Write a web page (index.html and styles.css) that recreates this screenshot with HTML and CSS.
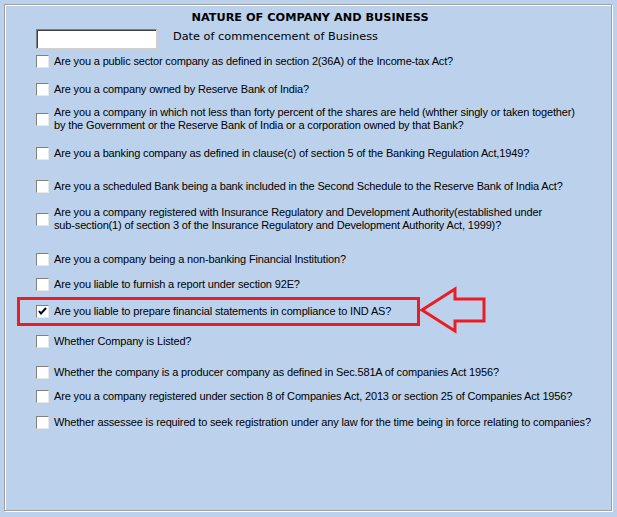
FILE: index.html
```html
<!DOCTYPE html>
<html lang="en">
<head>
    <meta charset="UTF-8">
    <meta name="viewport" content="width=device-width, initial-scale=1.0">
    <title>Nature of Company and Business</title>
    <link rel="stylesheet" href="styles.css">
</head>
<body>
    <div id="nature-frame">
        <div id="nature-title">NATURE OF COMPANY AND BUSINESS</div>

        <div id="date-row">
            <input type="text" id="date-input">
            <label for="date-input" id="date-label">Date of commencement of Business</label>
        </div>

        <div id="questions">
            <div class="question"><span class="check"></span><span class="text">Are you a public sector company as defined in section 2(36A) of the Income-tax Act?</span></div>
            <div class="question"><span class="check"></span><span class="text">Are you a company owned by Reserve Bank of India?</span></div>
            <div class="question two-line"><span class="check"></span><span class="text">Are you a company in which not less than forty percent of the shares are held (whther singly or taken together)<br>by the Government or the Reserve Bank of India or a corporation owned by that Bank?</span></div>
            <div class="question"><span class="check"></span><span class="text">Are you a banking company as defined in clause(c) of section 5 of the Banking Regulation Act,1949?</span></div>
            <div class="question"><span class="check"></span><span class="text">Are you a scheduled Bank being a bank included in the Second Schedule to the Reserve Bank of India Act?</span></div>
            <div class="question two-line"><span class="check"></span><span class="text">Are you a company registered with Insurance Regulatory and Development Authority(established under<br>sub-section(1) of section 3 of the Insurance Regulatory and Development Authority Act, 1999)?</span></div>
            <div class="question"><span class="check"></span><span class="text">Are you a company being a non-banking Financial Institution?</span></div>
            <div class="question"><span class="check"></span><span class="text">Are you liable to furnish a report under section 92E?</span></div>
            <div class="question"><span class="check checked"><svg width="11" height="11" viewBox="0 0 11 11"><path d="M2 5 L4 7.5 L9 2" fill="none" stroke="#000" stroke-width="2"/></svg></span><span class="text">Are you liable to prepare financial statements in compliance to IND AS?</span></div>
            <div class="question"><span class="check"></span><span class="text">Whether Company is Listed?</span></div>
            <div class="question"><span class="check"></span><span class="text">Whether the company is a producer company as defined in Sec.581A of companies Act 1956?</span></div>
            <div class="question"><span class="check"></span><span class="text">Are you a company registered under section 8 of Companies Act, 2013 or section 25 of Companies Act 1956?</span></div>
            <div class="question"><span class="check"></span><span class="text">Whether assessee is required to seek registration under any law for the time being in force relating to companies?</span></div>
        </div>
    </div>

    <!-- annotation pointing at the IND AS question -->
    <svg id="callout" width="617" height="517" viewBox="0 0 617 517">
        <rect x="18.5" y="298.5" width="400" height="26" fill="none" stroke="#ec1c24" stroke-width="3"/>
        <polygon points="422,310 455,289 455,299 484,299 484,321 455,321 455,331" fill="none" stroke="#ec1c24" stroke-width="3"/>
    </svg>
</body>
</html>
```

FILE: styles.css
```css
body {
    margin: 0;
    width: 617px;
    height: 517px;
    background-color: #bcd2ec;
    font-family: "Liberation Sans", Arial, sans-serif;
    font-size: 11px;
    color: #000;
    position: relative;
    overflow: hidden;
}

#nature-frame {
    margin: 4px 0 0 4px;
    width: 606px;
    height: 505px;
    border: 1px solid #a0a0a0;
    box-shadow: inset 1px 1px 0 #fff, 1px 1px 0 #fff;
}

#nature-title {
    margin-top: 6px;
    padding-left: 4px;
    text-align: center;
    font-family: "DejaVu Sans", Verdana, sans-serif;
    font-weight: bold;
    font-size: 11.3px;
    height: 14px;
    line-height: 14px;
}

#date-row {
    display: flex;
    align-items: center;
    margin-top: 4px;
    padding-left: 31px;
}

#date-input {
    box-sizing: border-box;
    width: 121px;
    height: 20px;
    margin: 0;
    padding: 0;
    border: 1px solid;
    border-color: #808080 #d4d0c8 #d4d0c8 #808080;
    box-shadow: inset 1px 1px 0 #404040;
    background: #fff;
}

#date-label {
    margin-left: 16px;
    margin-top: -5px;
    font-family: "DejaVu Sans", Verdana, sans-serif;
    font-size: 11.3px;
}

#questions {
    padding-left: 31px;
}

.question {
    display: flex;
    align-items: center;
    height: 24px;
}

.question.two-line {
    height: 28px;
}

.question:nth-child(2) { margin-top: 4px; }
.question:nth-child(3) { margin-top: 4px; }
.question:nth-child(4) { margin-top: 8px; }
.question:nth-child(5) { margin-top: 9px; }
.question:nth-child(6) { margin-top: 7px; }
.question:nth-child(7) { margin-top: 14px; }
.question:nth-child(8) { margin-top: 1px; }
.question:nth-child(9) { margin-top: 3px; }
.question:nth-child(10) { margin-top: 6px; }
.question:nth-child(11) { margin-top: 7px; }
.question:nth-child(12) { margin-top: 0; }
.question:nth-child(13) { margin-top: 2px; }

.check {
    box-sizing: border-box;
    flex: none;
    width: 13px;
    height: 13px;
    border: 1px solid;
    border-color: #808080 #e8e8e8 #e8e8e8 #808080;
    background: #fff;
    display: flex;
    align-items: center;
    justify-content: center;
}

.text {
    margin-left: 5px;
    line-height: 13px;
    white-space: nowrap;
    letter-spacing: -0.15px;
}

#callout {
    position: absolute;
    left: 0;
    top: 0;
    pointer-events: none;
}
```
